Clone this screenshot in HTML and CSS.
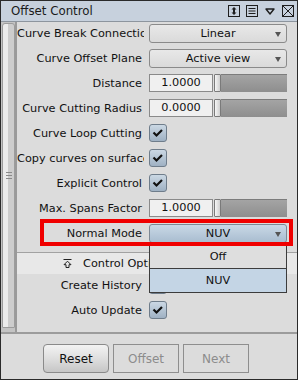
FILE: index.html
```html
<!DOCTYPE html>
<html lang="en">
<head>
  <meta charset="UTF-8">
  <title>Offset Control</title>
  <link rel="stylesheet" href="styles.css">
</head>
<body>
  <div class="window">
    <!-- Title bar -->
    <div class="titlebar">
      <span class="title">Offset Control</span>
      <div class="tb-icons">
        <svg width="12" height="12" viewBox="0 0 12 12">
          <rect x="0.5" y="0.5" width="11" height="11" fill="none" stroke="#1e1e1e"/>
          <line x1="6" y1="4" x2="6" y2="8" stroke="#1e1e1e" stroke-width="2"/>
          <polygon points="3.5,4.5 6,2 8.5,4.5" fill="#1e1e1e"/>
          <polygon points="3.5,7.5 6,10 8.5,7.5" fill="#1e1e1e"/>
        </svg>
        <svg width="12" height="12" viewBox="0 0 12 12">
          <rect x="0.5" y="0.5" width="11" height="11" fill="none" stroke="#1e1e1e"/>
          <line x1="2.5" y1="3.5" x2="9.5" y2="3.5" stroke="#1e1e1e"/>
          <line x1="2.5" y1="6" x2="9.5" y2="6" stroke="#1e1e1e"/>
          <line x1="2.5" y1="8.5" x2="9.5" y2="8.5" stroke="#1e1e1e"/>
        </svg>
        <svg class="tb-tri" width="10" height="7" viewBox="0 0 10 7">
          <polygon points="1,1 9,1 5,6" fill="none" stroke="#1e1e1e" stroke-width="1.4" stroke-linejoin="round"/>
        </svg>
        <svg width="12" height="12" viewBox="0 0 12 12">
          <rect x="0.5" y="0.5" width="11" height="11" fill="none" stroke="#1e1e1e"/>
          <line x1="1" y1="1" x2="11" y2="11" stroke="#1e1e1e"/>
          <line x1="11" y1="1" x2="1" y2="11" stroke="#1e1e1e"/>
        </svg>
      </div>
    </div>

    <div class="main">
      <!-- Left scrollbar -->
      <div class="scroll">
        <div class="thumb">
          <svg width="6" height="7" viewBox="0 0 6 7">
            <line x1="0" y1="0.5" x2="6" y2="0.5" stroke="#8a8a8a"/>
            <line x1="0" y1="3.5" x2="6" y2="3.5" stroke="#8a8a8a"/>
            <line x1="0" y1="6.5" x2="6" y2="6.5" stroke="#8a8a8a"/>
          </svg>
        </div>
      </div>

      <div class="content">
        <div class="row">
          <div class="label">Curve Break Connection</div>
          <div class="select"><span>Linear</span><i class="arrow"></i></div>
        </div>
        <div class="row">
          <div class="label">Curve Offset Plane</div>
          <div class="select"><span>Active view</span><i class="arrow"></i></div>
        </div>
        <div class="row">
          <div class="label">Distance</div>
          <div class="numslider">
            <div class="field">1.0000</div>
            <div class="handle"></div>
            <div class="track"></div>
          </div>
        </div>
        <div class="row">
          <div class="label">Curve Cutting Radius</div>
          <div class="numslider">
            <div class="field">0.0000</div>
            <div class="handle"></div>
            <div class="track"></div>
          </div>
        </div>
        <div class="row">
          <div class="label">Curve Loop Cutting</div>
          <div class="check"><svg width="18" height="18" viewBox="0 0 18 18"><polyline points="4.5,8.5 7.5,11.5 13,6" fill="none" stroke="#111" stroke-width="2.2"/></svg></div>
        </div>
        <div class="row">
          <div class="label">Copy curves on surface</div>
          <div class="check"><svg width="18" height="18" viewBox="0 0 18 18"><polyline points="4.5,8.5 7.5,11.5 13,6" fill="none" stroke="#111" stroke-width="2.2"/></svg></div>
        </div>
        <div class="row">
          <div class="label">Explicit Control</div>
          <div class="check"><svg width="18" height="18" viewBox="0 0 18 18"><polyline points="4.5,8.5 7.5,11.5 13,6" fill="none" stroke="#111" stroke-width="2.2"/></svg></div>
        </div>
        <div class="row">
          <div class="label">Max. Spans Factor</div>
          <div class="numslider">
            <div class="field">1.0000</div>
            <div class="handle"></div>
            <div class="track"></div>
          </div>
        </div>
        <div class="row row-marked">
          <div class="label">Normal Mode</div>
          <div class="select select-open">
            <span>NUV</span><i class="arrow"></i>
            <div class="popup">
              <div class="popup-item">Off</div>
              <div class="popup-item current">NUV</div>
            </div>
          </div>
          <div class="marker"></div>
        </div>

        <div class="section">
          <svg width="9" height="9" viewBox="0 0 9 9">
            <line x1="0.5" y1="0.5" x2="8.5" y2="0.5" stroke="#222"/>
            <polygon points="4.5,2.2 8,5.7 6,5.7 6,8.5 3,8.5 3,5.7 1,5.7" fill="none" stroke="#222" stroke-linejoin="round"/>
          </svg>
          <span>Control Options</span>
        </div>

        <div class="row">
          <div class="label">Create History</div>
          <div class="check"><svg width="18" height="18" viewBox="0 0 18 18"><polyline points="4.5,8.5 7.5,11.5 13,6" fill="none" stroke="#111" stroke-width="2.2"/></svg></div>
        </div>
        <div class="row">
          <div class="label">Auto Update</div>
          <div class="check"><svg width="18" height="18" viewBox="0 0 18 18"><polyline points="4.5,8.5 7.5,11.5 13,6" fill="none" stroke="#111" stroke-width="2.2"/></svg></div>
        </div>
      </div>
    </div>

    <!-- Bottom buttons -->
    <div class="footer">
      <button class="btn">Reset</button>
      <button class="btn disabled">Offset</button>
      <button class="btn disabled">Next</button>
    </div>
  </div>
</body>
</html>
```

FILE: styles.css
```css
body {
  margin: 0;
  font-family: "DejaVu Sans", sans-serif;
  font-size: 11.3px;
  color: #111;
}
.window {
  width: 298px;
  height: 380px;
  box-sizing: border-box;
  border: 1px solid #2a2a2a;
  background-color: #dcdcdc;
  display: flex;
  flex-direction: column;
}

/* Title bar */
.titlebar {
  height: 20px;
  flex: none;
  display: flex;
  align-items: center;
  justify-content: space-between;
  background-color: #c7d1dd;
  border-bottom: 1px solid #8d959e;
}
.title {
  padding-left: 10px;
  font-size: 11.8px;
  color: #1a1a1a;
}
.tb-icons {
  display: flex;
  align-items: center;
  gap: 6px;
  padding-right: 3px;
}
.tb-icons svg {
  display: block;
}
.tb-tri {
  margin: 0 1px;
}

/* Main area */
.main {
  flex: 1;
  display: flex;
  min-height: 0;
}
.scroll {
  width: 13px;
  flex: none;
  background-color: #c4c4c4;
  border-right: 2px solid #9a9a9a;
  padding: 1px 0 0 1px;
  box-sizing: content-box;
}
.thumb {
  height: 303px;
  width: 11px;
  border: 1px solid #9c9c9c;
  border-radius: 3px 3px 1px 1px;
  background: linear-gradient(to right, #ececec 50%, #cdcdcd 50%);
  display: flex;
  align-items: center;
  justify-content: center;
}
.thumb svg {
  display: block;
}
.content {
  flex: 1;
  padding-top: 2px;
  position: relative;
}

/* Form rows */
.row {
  display: flex;
  height: 25px;
  gap: 5px;
  position: relative;
}
.label {
  width: 125px;
  padding-right: 2px;
  height: 19px;
  line-height: 20px;
  text-align: right;
  white-space: nowrap;
  overflow: hidden;
  flex: none;
}
.select {
  width: 138px;
  height: 19px;
  box-sizing: border-box;
  border: 1px solid #8a8a8a;
  border-radius: 3px;
  background: linear-gradient(#e8e8e8, #dadada);
  display: flex;
  align-items: center;
  justify-content: center;
  position: relative;
}
.arrow {
  position: absolute;
  right: 5px;
  top: 7px;
  border-left: 3px solid transparent;
  border-right: 3px solid transparent;
  border-top: 5px solid #555;
}
.select-open {
  background: linear-gradient(#c9d8e6, #a9bdd0);
  border-color: #7d8894;
}

/* Dropdown menu */
.popup {
  position: absolute;
  top: 18px;
  left: -1px;
  right: -1px;
  border: 1px solid #3c3c3c;
  background-color: #dedede;
  z-index: 2;
}
.popup-item {
  height: 24px;
  padding-top: 2px;
  box-sizing: border-box;
  line-height: 22px;
  text-align: center;
}
.popup-item.current {
  height: 24px;
  padding-top: 0;
  line-height: 23px;
  background-color: #c4d5e5;
  border-top: 1px solid #3c3c3c;
}

/* Red annotation box */
.marker {
  position: absolute;
  left: 23px;
  top: -5px;
  width: 245px;
  height: 19px;
  border: 4px solid #f00000;
  z-index: 3;
  pointer-events: none;
}

/* Number field with slider */
.numslider {
  display: flex;
  width: 138px;
  height: 18px;
}
.field {
  width: 64px;
  box-sizing: border-box;
  border: 1px solid #8a8a8a;
  background-color: #f0f0f0;
  text-align: center;
  line-height: 16px;
}
.handle {
  width: 5px;
  margin-left: 1px;
  border: 1px solid #7a7a7a;
  border-radius: 1px;
  background: linear-gradient(to right, #f6f6f6, #cfcfcf);
  box-sizing: content-box;
  height: 16px;
}
.track {
  flex: 1;
  border-top: 1px solid #7c7c7c;
  background: linear-gradient(#a4a4a4, #8e8e8e);
}

/* Checkbox */
.check {
  width: 18px;
  height: 18px;
  box-sizing: border-box;
  border: 1px solid #6f7d8b;
  border-radius: 3px;
  background: linear-gradient(#cbd8e4, #9fb1c3);
}
.check svg {
  display: block;
  margin: -1px;
}

/* Collapsible section header */
.section {
  margin: 3px 0 2px;
  height: 21px;
  border-top: 1px solid #a2a2a2;
  background-color: #e8e8e8;
  display: flex;
  align-items: center;
  gap: 11px;
  padding-left: 46px;
}
.section svg {
  display: block;
}

/* Footer buttons */
.footer {
  height: 47px;
  flex: none;
  border-top: 2px solid #9c9c9c;
  display: flex;
  justify-content: center;
  gap: 4px;
  padding: 10px 6px 0 0;
  box-sizing: border-box;
}
.btn {
  width: 66px;
  height: 29px;
  font-family: "DejaVu Sans", sans-serif;
  font-size: 12px;
  color: #111;
  border: 1px solid #8a8a8a;
  border-radius: 4px;
  background: linear-gradient(#f3f3f3, #dcdcdc 55%, #c6c6c6);
  padding: 0;
}
.btn.disabled {
  color: #8c8c8c;
  border-color: #8e8e8e;
  border-radius: 0;
  background: #dcdcdc;
}
```
